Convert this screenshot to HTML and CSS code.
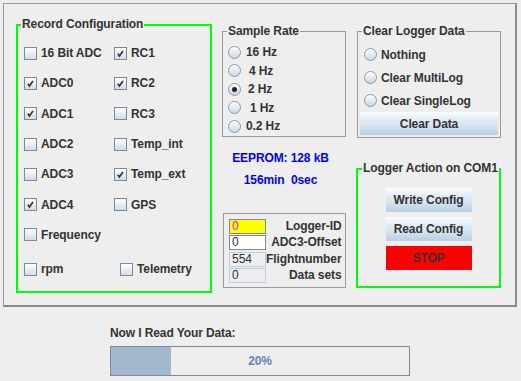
FILE: index.html
```html
<!DOCTYPE html>
<html lang="en">
<head>
    <meta charset="UTF-8">
    <meta name="viewport" content="width=device-width, initial-scale=1.0">
    <title>Logger Configuration</title>
    <link rel="stylesheet" href="styles.css">
</head>
<body>

<!-- settings panel -->
<div class="panel">

    <!-- channels to record -->
    <fieldset class="box green record">
        <legend>Record Configuration</legend>
        <div class="checks">
            <label class="check"><span class="cb"></span>16 Bit ADC</label>
            <label class="check"><span class="cb"><svg viewBox="0 0 11 11" width="11" height="11"><path d="M2.8 5.6 L4.4 8 L8 3" /></svg></span>RC1</label>
            <label class="check"><span class="cb"><svg viewBox="0 0 11 11" width="11" height="11"><path d="M2.8 5.6 L4.4 8 L8 3" /></svg></span>ADC0</label>
            <label class="check"><span class="cb"><svg viewBox="0 0 11 11" width="11" height="11"><path d="M2.8 5.6 L4.4 8 L8 3" /></svg></span>RC2</label>
            <label class="check"><span class="cb"><svg viewBox="0 0 11 11" width="11" height="11"><path d="M2.8 5.6 L4.4 8 L8 3" /></svg></span>ADC1</label>
            <label class="check"><span class="cb"></span>RC3</label>
            <label class="check"><span class="cb"></span>ADC2</label>
            <label class="check"><span class="cb"></span>Temp_int</label>
            <label class="check"><span class="cb"></span>ADC3</label>
            <label class="check"><span class="cb"><svg viewBox="0 0 11 11" width="11" height="11"><path d="M2.8 5.6 L4.4 8 L8 3" /></svg></span>Temp_ext</label>
            <label class="check"><span class="cb"><svg viewBox="0 0 11 11" width="11" height="11"><path d="M2.8 5.6 L4.4 8 L8 3" /></svg></span>ADC4</label>
            <label class="check"><span class="cb"></span>GPS</label>
            <label class="check"><span class="cb"></span>Frequency</label>
        </div>
        <div class="checks-last">
            <label class="check rpm"><span class="cb"></span>rpm</label>
            <label class="check"><span class="cb"></span>Telemetry</label>
        </div>
    </fieldset>

    <!-- middle column -->
    <div class="col mid">
        <fieldset class="box gray rate">
            <legend>Sample Rate</legend>
            <div class="radios">
                <label class="radio"><span class="rb"></span>16 Hz</label>
                <label class="radio"><span class="rb"></span><span class="sp2">4 Hz</span></label>
                <label class="radio"><span class="rb on"></span><span class="sp1">2 Hz</span></label>
                <label class="radio"><span class="rb"></span><span class="sp3">1 Hz</span></label>
                <label class="radio"><span class="rb"></span>0.2 Hz</label>
            </div>
        </fieldset>

        <div class="eeprom">
            <div>EEPROM: 128 kB</div>
            <div>156min&nbsp; 0sec</div>
        </div>

        <div class="logger">
            <div class="field yellow">0</div><span>Logger-ID</span>
            <div class="field">0</div><span>ADC3-Offset</span>
            <div class="field off">554</div><span>Flightnumber</span>
            <div class="field off">0</div><span>Data sets</span>
        </div>
    </div>

    <!-- right column -->
    <div class="col right">
        <fieldset class="box gray clear">
            <legend>Clear Logger Data</legend>
            <div class="radios">
                <label class="radio"><span class="rb"></span>Nothing</label>
                <label class="radio"><span class="rb"></span>Clear MultiLog</label>
                <label class="radio"><span class="rb"></span>Clear SingleLog</label>
            </div>
            <button class="btn clear-btn">Clear Data</button>
        </fieldset>

        <fieldset class="box green action">
            <legend>Logger Action on COM1</legend>
            <div class="actions">
                <button class="btn">Write Config</button>
                <button class="btn">Read Config</button>
                <button class="btn stop">STOP</button>
            </div>
        </fieldset>
    </div>
</div>

<!-- read progress -->
<div class="progress">
    <div class="progress-label">Now I Read Your Data:</div>
    <div class="bar">
        <div class="fill" style="width: 20%"></div>
        <span class="pct">20%</span>
    </div>
</div>

</body>
</html>
```

FILE: styles.css
```css
/* general */
body {
    margin: 0;
    background: #eeeeee;
    font-family: "Liberation Sans", Arial, sans-serif;
    font-size: 12px;
    letter-spacing: -0.1px;
    font-weight: bold;
    color: #333;
}

.panel {
    box-sizing: border-box;
    width: 514px;
    height: 304px;
    margin: 3px 0 0 3px;
    border: 1px solid #999;
    border-right: 2px solid #8a8a8a;
    border-bottom: 2px solid #8a8a8a;
    padding: 14px 0 0 12px;
    display: flex;
    align-items: flex-start;
}

/* titled boxes */
.box {
    box-sizing: border-box;
    margin: 0;
    padding: 0;
    min-width: 0;
}

.box legend {
    padding: 0 1px;
    margin-left: 4px;
    line-height: 13px;
}

.green {
    border: 2px solid #00ff00;
}

.gray {
    border: 1px solid #9a9a9a;
}

/* record configuration */
.record {
    width: 196px;
    height: 275px;
}

.record legend {
    margin-left: 3px;
}

.checks {
    display: grid;
    grid-template-columns: 90px 1fr;
    grid-auto-rows: 30.3px;
    padding: 7px 0 0 6px;
}

.checks-last {
    display: flex;
    height: 30px;
    margin-top: 4px;
    padding-left: 6px;
}

.check {
    display: flex;
    align-items: center;
    gap: 4px;
}

.rpm {
    width: 96px;
}

.cb {
    box-sizing: border-box;
    width: 13px;
    height: 13px;
    border: 1px solid #7a8a99;
    background: linear-gradient(#ffffff, #cfdcea);
    display: flex;
}

.cb svg path {
    fill: none;
    stroke: #333;
    stroke-width: 1.7;
}

/* radio buttons */
.radios {
    padding: 5px 0 0 5px;
}

.radio {
    display: flex;
    align-items: center;
    gap: 5px;
    height: 18.5px;
}

.rb {
    box-sizing: border-box;
    width: 13px;
    height: 13px;
    border-radius: 50%;
    border: 1px solid #8a99a8;
    background: linear-gradient(#ffffff, #c8d7e6);
    display: flex;
    align-items: center;
    justify-content: center;
}

.rb.on::after {
    content: '';
    width: 5px;
    height: 5px;
    border-radius: 50%;
    background: #222;
}

.sp1 { margin-left: 2px; }
.sp2 { margin-left: 3px; }
.sp3 { margin-left: 4px; }

/* middle column */
.col {
    display: flex;
    flex-direction: column;
    margin-top: 7px;
}

.mid {
    margin-left: 10px;
}

.rate {
    width: 124px;
    height: 112px;
}

.eeprom {
    margin-top: 10px;
    padding-right: 7px;
    color: #0000ff;
    line-height: 22px;
    text-align: center;
}

.logger {
    box-sizing: border-box;
    width: 123px;
    height: 75px;
    margin: 22px 0 0 1px;
    border: 1px solid #9a9a9a;
    padding: 5px 6px 0 5px;
    display: grid;
    grid-template-columns: 37px 1fr;
    grid-auto-rows: 15px;
    row-gap: 1.3px;
    align-items: center;
}

.logger span {
    text-align: right;
    line-height: 15px;
}

.field {
    box-sizing: border-box;
    height: 15px;
    border: 1px solid #7a8a99;
    background: #fff;
    padding-left: 2px;
    font-size: 12px;
    font-weight: normal;
    letter-spacing: 0;
    line-height: 13px;
}

.field.yellow {
    background: #ffff00;
    color: #ff00ff;
}

.field.off {
    background: #eeeeee;
    border-color: #b8cfe5;
}

/* right column */
.right {
    margin-left: 11px;
}

.clear {
    width: 144px;
    height: 113px;
}

.clear .radios {
    padding: 5px 0 0 6px;
}

.clear .radio {
    height: 23px;
    gap: 4px;
}

.btn {
    border: none;
    padding: 0;
    font: inherit;
    letter-spacing: inherit;
    color: #333;
    background: linear-gradient(#fbfdfe 0%, #dde8f3 40%, #dde8f3 50%, #b8cfe5 100%);
}

.clear-btn {
    display: block;
    width: 138px;
    height: 23px;
    margin: 0 1px 0 2px;
}

.action {
    width: 145px;
    height: 126px;
    margin: 24px 0 0 -1px;
}

.actions {
    display: flex;
    flex-direction: column;
    align-items: center;
    gap: 5px;
    padding-top: 13px;
}

.actions .btn {
    width: 86px;
    height: 24px;
}

.btn.stop {
    background: #ff0000;
}

/* progress */
.progress {
    padding: 19px 0 0 110px;
}

.progress-label {
    line-height: 14px;
}

.bar {
    box-sizing: border-box;
    width: 300px;
    height: 30px;
    margin-top: 6px;
    border: 1px solid #7a8a99;
    display: grid;
}

.fill,
.pct {
    grid-area: 1 / 1;
}

.fill {
    background: #a3b8cc;
}

.pct {
    align-self: center;
    justify-self: center;
    color: #6382bf;
}
```
